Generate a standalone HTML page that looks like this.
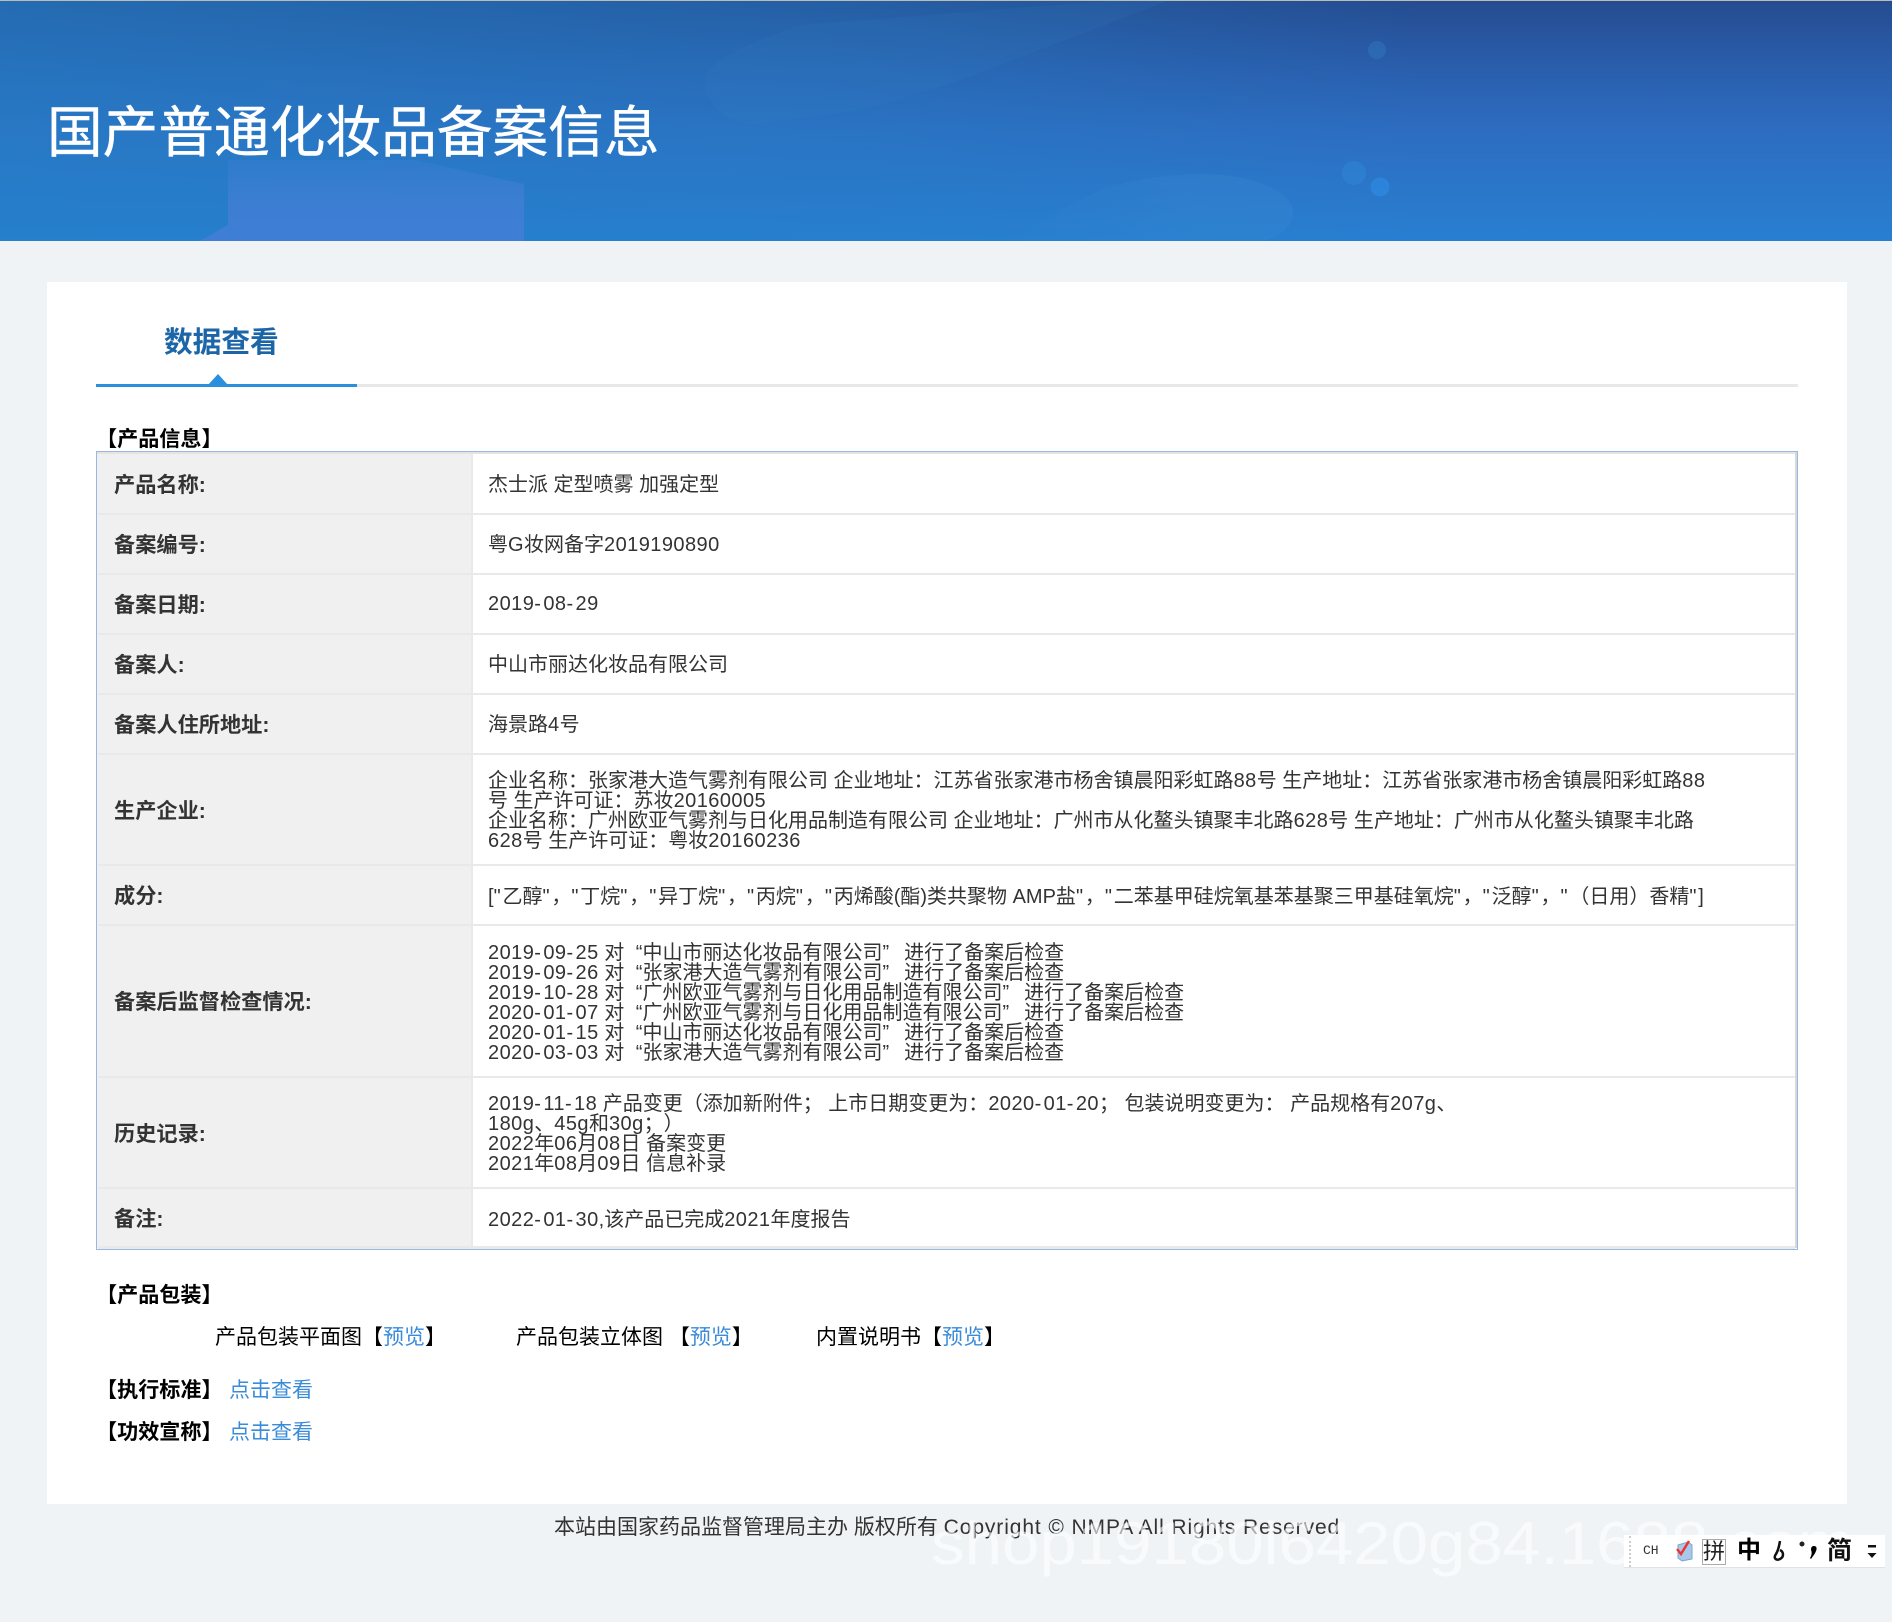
<!DOCTYPE html>
<html lang="zh-CN"><head><meta charset="utf-8"><title>国产普通化妆品备案信息</title>
<style>
html,body{margin:0;padding:0}
body{width:1892px;height:1622px;position:relative;overflow:hidden;background:#f0f3f6;font-family:"Liberation Sans","Noto Sans CJK SC",sans-serif;color:#333;text-spacing-trim:space-all}
.a{position:absolute}
.t{position:absolute;white-space:nowrap;font-size:20px;line-height:20px}
.l{left:114px;font-weight:700;color:#333;font-size:21.2px}
.v{left:488px;color:#333}
.s{font-weight:700;color:#000;font-size:21.1px}
.k{color:#000;font-size:21px}
.b{color:#3a8bd8}
.h{position:absolute;left:98px;width:1697px;height:2px;background:#e8e9ea}
i{font-style:normal;letter-spacing:.44px}
u{text-decoration:none;letter-spacing:2.4px}
s{text-decoration:none;letter-spacing:1.8px}
em{font-style:normal;margin-left:6px}
q{quotes:none;margin-right:15px}
</style></head><body>
<svg class="a" style="left:0;top:0" width="1892" height="241" viewBox="0 0 1892 241">
<defs><linearGradient id="g" x1="0" y1="0" x2="0" y2="1"><stop offset="0" stop-color="#254c90"/><stop offset=".3" stop-color="#2a5fae"/><stop offset=".55" stop-color="#2d6dc1"/><stop offset="1" stop-color="#287fd1"/></linearGradient>
<linearGradient id="g3" x1="0" y1="0" x2="1" y2="0"><stop offset="0" stop-color="#2480c8" stop-opacity=".6"/><stop offset=".45" stop-color="#2480c8" stop-opacity=".35"/><stop offset=".75" stop-color="#2480c8" stop-opacity="0"/></linearGradient>
<linearGradient id="g4" x1="0" y1="0" x2="0" y2="1"><stop offset="0" stop-color="#3f7ed4" stop-opacity=".35"/><stop offset=".6" stop-color="#3f7ed4" stop-opacity=".9"/><stop offset="1" stop-color="#3f7ed4"/></linearGradient>
<linearGradient id="g5" x1="0" y1="0" x2="1" y2="0"><stop offset="0" stop-color="#3f90d4" stop-opacity="0"/><stop offset=".6" stop-color="#3f90d4" stop-opacity=".2"/><stop offset="1" stop-color="#3f90d4" stop-opacity=".22"/></linearGradient></defs>
<rect width="1892" height="241" fill="url(#g)"/>
<rect width="1892" height="241" fill="url(#g3)"/>
<path d="M705 85C700 60 760 40 800 25L1120 0H1170L1000 65C950 85 900 100 860 110L760 124C730 126 710 110 705 85Z" fill="#3a86c8" opacity=".12"/>
<path d="M1000 241L1100 190C1180 165 1260 170 1288 200C1300 215 1290 232 1265 241Z" fill="url(#g5)"/>
<path d="M200 241L228 225V160H415L524 184V241Z" fill="url(#g4)"/>
<circle cx="1377" cy="50" r="9" fill="#2f74bd" opacity=".55"/>
<circle cx="1354" cy="173" r="12" fill="#2e84d4" opacity=".6"/>
<circle cx="1380" cy="187" r="9.5" fill="#2c86dc" opacity=".9"/>
<rect width="1892" height="1" fill="#bcbcb6"/>
</svg>
<div class="t" style="left:47px;top:103px;font-size:55.7px;line-height:60px;color:#fff;-webkit-text-stroke:.4px #fff">国产普通化妆品备案信息</div>

<div class="a" style="left:47px;top:282px;width:1800px;height:1222px;background:#fff"></div>
<div class="t" style="left:164px;top:327px;font-size:28.7px;line-height:32px;font-weight:700;color:#1c66a8">数据查看</div>
<div class="a" style="left:96px;top:384px;width:1702px;height:3px;background:#e8e8e8"></div>
<div class="a" style="left:96px;top:384px;width:261px;height:3px;background:#2a8fdc"></div>
<div class="a" style="left:208px;top:374px;width:0;height:0;border-left:10px solid transparent;border-right:10px solid transparent;border-bottom:11px solid #2a8fdc"></div>
<div class="t s" style="left:96px;top:430px">【产品信息】</div>

<div class="a" style="left:96px;top:451px;width:1702px;height:799px;box-sizing:border-box;border:1px solid #9ab6e6;background:#fff"></div>
<div class="a" style="left:97px;top:452px;width:374px;height:796px;background:#f0f0f0"></div>
<div class="a" style="left:471px;top:452px;width:2px;height:796px;background:#e8e9ea"></div>
<div class="a" style="left:97px;top:452px;width:1700px;height:2px;background:#e3e4e4"></div>
<div class="a" style="left:1795px;top:452px;width:2px;height:796px;background:#d8d8d8"></div>
<div class="h" style="top:513px"></div><div class="h" style="top:573px"></div><div class="h" style="top:633px"></div><div class="h" style="top:693px"></div><div class="h" style="top:753px"></div><div class="h" style="top:864px"></div><div class="h" style="top:924px"></div><div class="h" style="top:1076px"></div><div class="h" style="top:1187px"></div><div class="h" style="top:1246px;height:3px"></div>

<div class="t l" style="top:476px">产品名称:</div><div class="t v" style="top:475px">杰士派 定型喷雾 加强定型</div>
<div class="t l" style="top:536px">备案编号:</div><div class="t v" style="top:535px">粤<i>G</i>妆网备字<i>2019190890</i></div>
<div class="t l" style="top:596px">备案日期:</div><div class="t v" style="top:594px"><i>2019</i><u>-</u><i>08</i><u>-</u><i>29</i></div>
<div class="t l" style="top:656px">备案人:</div><div class="t v" style="top:655px">中山市丽达化妆品有限公司</div>
<div class="t l" style="top:716px">备案人住所地址:</div><div class="t v" style="top:715px">海景路<i>4</i>号</div>
<div class="t l" style="top:802px">生产企业:</div>
<div class="t v" style="top:771px">企业名称：张家港大造气雾剂有限公司 企业地址：江苏省张家港市杨舍镇晨阳彩虹路<i>88</i>号 生产地址：江苏省张家港市杨舍镇晨阳彩虹路<i>88</i></div>
<div class="t v" style="top:791px">号 生产许可证：苏妆<i>20160005</i></div>
<div class="t v" style="top:811px">企业名称：广州欧亚气雾剂与日化用品制造有限公司 企业地址：广州市从化鳌头镇聚丰北路<i>628</i>号 生产地址：广州市从化鳌头镇聚丰北路</div>
<div class="t v" style="top:831px"><i>628</i>号 生产许可证：粤妆<i>20160236</i></div>
<div class="t l" style="top:887px">成分:</div>
<div class="t v" style="top:887px">[<s>"</s>乙醇<s>"</s>，<s>"</s>丁烷<s>"</s>，<s>"</s>异丁烷<s>"</s>，<s>"</s>丙烷<s>"</s>，<s>"</s>丙烯酸(酯)类共聚物 AMP盐<s>"</s>，<s>"</s>二苯基甲硅烷氧基苯基聚三甲基硅氧烷<s>"</s>，<s>"</s>泛醇<s>"</s>，<s>"</s>（日用）香精<s>"</s>]</div>
<div class="t l" style="top:993px">备案后监督检查情况:</div>
<div class="t v" style="top:943px"><i>2019</i><u>-</u><i>09</i><u>-</u><i>25</i> 对 <em>“</em>中山市丽达化妆品有限公司<q>”</q>进行了备案后检查</div>
<div class="t v" style="top:963px"><i>2019</i><u>-</u><i>09</i><u>-</u><i>26</i> 对 <em>“</em>张家港大造气雾剂有限公司<q>”</q>进行了备案后检查</div>
<div class="t v" style="top:983px"><i>2019</i><u>-</u><i>10</i><u>-</u><i>28</i> 对 <em>“</em>广州欧亚气雾剂与日化用品制造有限公司<q>”</q>进行了备案后检查</div>
<div class="t v" style="top:1003px"><i>2020</i><u>-</u><i>01</i><u>-</u><i>07</i> 对 <em>“</em>广州欧亚气雾剂与日化用品制造有限公司<q>”</q>进行了备案后检查</div>
<div class="t v" style="top:1023px"><i>2020</i><u>-</u><i>01</i><u>-</u><i>15</i> 对 <em>“</em>中山市丽达化妆品有限公司<q>”</q>进行了备案后检查</div>
<div class="t v" style="top:1043px"><i>2020</i><u>-</u><i>03</i><u>-</u><i>03</i> 对 <em>“</em>张家港大造气雾剂有限公司<q>”</q>进行了备案后检查</div>
<div class="t l" style="top:1125px">历史记录:</div>
<div class="t v" style="top:1094px"><i>2019</i><u>-</u><i>11</i><u>-</u><i>18</i> 产品变更（添加新附件； 上市日期变更为：<i>2020</i><u>-</u><i>01</i><u>-</u><i>20</i>； 包装说明变更为： 产品规格有<i>207g</i>、</div>
<div class="t v" style="top:1114px"><i>180g</i>、<i>45g</i>和<i>30g</i>；）</div>
<div class="t v" style="top:1134px"><i>2022</i>年<i>06</i>月<i>08</i>日 备案变更</div>
<div class="t v" style="top:1154px"><i>2021</i>年<i>08</i>月<i>09</i>日 信息补录</div>
<div class="t l" style="top:1210px">备注:</div><div class="t v" style="top:1210px"><i>2022</i><u>-</u><i>01</i><u>-</u><i>30</i>,该产品已完成<i>2021</i>年度报告</div>

<div class="t s" style="left:96px;top:1286px">【产品包装】</div>
<div class="t k" style="left:215px;top:1328px">产品包装平面图【<span class="b">预览</span>】</div>
<div class="t k" style="left:516px;top:1328px">产品包装立体图 【<span class="b">预览</span>】</div>
<div class="t k" style="left:816px;top:1328px">内置说明书【<span class="b">预览</span>】</div>
<div class="t s" style="left:96px;top:1381px">【执行标准】</div><div class="t b" style="left:229px;top:1381px;font-size:21px">点击查看</div>
<div class="t s" style="left:96px;top:1423px">【功效宣称】</div><div class="t b" style="left:229px;top:1423px;font-size:21px">点击查看</div>
<div class="t" style="left:554px;top:1518px;font-size:21px">本站由国家药品监督管理局主办 版权所有 <span style="letter-spacing:.9px">Copyright © NMPA All Rights Reserved</span></div>

<div class="t" style="left:931px;top:1514px;font-size:60px;line-height:60px;color:rgba(255,255,255,.6);transform:scaleX(1.12);transform-origin:0 0">shop19180l6420g84.1688.com</div>
<div class="a" style="left:1624px;top:1535px;width:261px;height:32px;background:#fff;border-bottom:1px solid #e2e2e2"></div>
<div class="a" style="left:1629px;top:1536px;width:0;height:31px;border-left:2px dotted #ccc"></div>
<div class="t" style="left:1643px;top:1542px;font:13px/18px 'Liberation Mono',monospace;color:#333">CH</div>
<svg class="a" style="left:1674px;top:1539px" width="22" height="24" viewBox="0 0 22 24"><path d="M4 6L14 3L18 6V20L8 22L4 19Z" fill="#a9c9ea" stroke="#7da4c8"/><path d="M3 10L7 15L15 2" fill="none" stroke="#e33" stroke-width="2.4"/></svg>
<div class="t" style="left:1702px;top:1539px;font-size:22px;line-height:26px;color:#222;outline:1px solid #aaa;outline-offset:-1px;width:24px;text-align:center">拼</div>
<div class="t" style="left:1737px;top:1538px;font-size:24px;line-height:26px;font-weight:700;color:#000">中</div>
<svg class="a" style="left:1770px;top:1539px" width="20" height="24" viewBox="0 0 20 24"><path d="M10 2C9 8 8 12 6 15C3 19 6 22 10 20C14 18 14 13 10 11" fill="none" stroke="#111" stroke-width="2.5"/></svg>
<svg class="a" style="left:1798px;top:1540px" width="22" height="22" viewBox="0 0 22 22"><circle cx="4" cy="4" r="2.5" fill="#222"/><path d="M16 6C19 6 19 9 18 11C17 14 15 16 13 19L12 18C14 15 14 12 13 10C13 7 14 6 16 6Z" fill="#000"/></svg>
<div class="t" style="left:1827px;top:1537px;font-size:25px;line-height:28px;font-weight:700;color:#111">简</div>
<svg class="a" style="left:1866px;top:1544px" width="12" height="16" viewBox="0 0 12 16"><rect x="2" y="1" width="8" height="2.5" fill="#111"/><path d="M1.5 9H10.5L6 14Z" fill="#111"/></svg>
</body></html>
